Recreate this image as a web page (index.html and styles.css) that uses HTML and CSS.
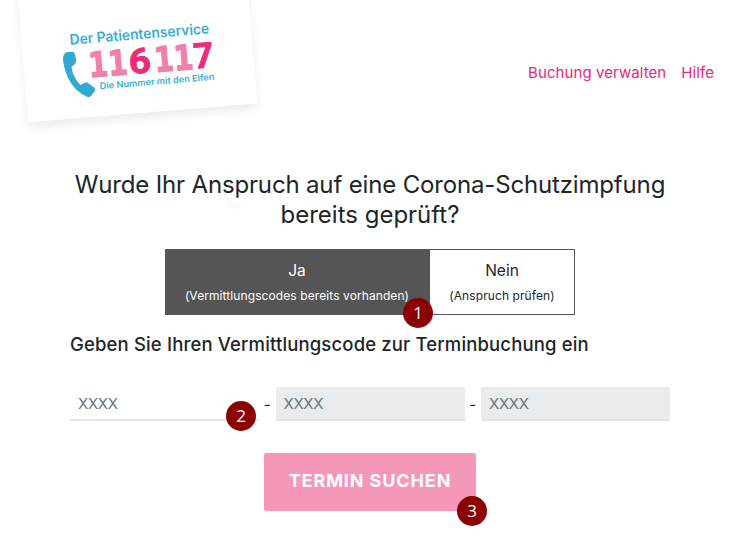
FILE: index.html
```html
<!DOCTYPE html>
<html lang="de">
<head>
<meta charset="utf-8">
<title>116117 Terminservice</title>
<link rel="stylesheet" href="styles.css">
</head>
<body>
<header class="header">
  <a class="logo">
    <span class="logo-card"></span>
    <svg class="logo-art" width="280" height="140" viewBox="0 0 280 140">
      <text class="logo-text" font-size="14.500" textLength="140" lengthAdjust="spacingAndGlyphs" transform="translate(70 44.800) rotate(-4.700)">Der Patientenservice</text>
      <g class="logo-digits">
        <text class="light" font-size="34.500" textLength="39" lengthAdjust="spacingAndGlyphs" transform="translate(89.500 77.300) rotate(-4.700)">11</text>
        <text class="strong" font-size="35" textLength="22" lengthAdjust="spacingAndGlyphs" transform="translate(129.700 74) rotate(-4.700)">6</text>
        <text class="light" font-size="34.500" textLength="39" lengthAdjust="spacingAndGlyphs" transform="translate(155.300 72) rotate(-4.700)">11</text>
        <text class="strong" font-size="35" textLength="20" lengthAdjust="spacingAndGlyphs" transform="translate(194.500 68.500) rotate(-4.700)">7</text>
      </g>
      <text class="logo-text" font-size="9.200" textLength="115" lengthAdjust="spacingAndGlyphs" transform="translate(100 89.300) rotate(-4.700)">Die Nummer mit den Elfen</text>
      <path class="handset" d="M66 52.500Q70 51.200 73.500 52Q75.500 53 76.200 61.500Q76 64 71.500 66.500Q72.500 77 80.500 85Q84 82 87.500 82.500L94 87.500Q96 89 94.500 91.500L91 96Q89.500 97.800 86.500 96.500C73.500 91 65 77 63 60Q62.700 54.500 66 52.500Z"/>
    </svg>
  </a>
  <nav class="nav">
    <a>Buchung verwalten</a>
    <a>Hilfe</a>
  </nav>
</header>
<main class="content">
  <h1 class="title"><span class="line-one">Wurde Ihr Anspruch auf eine Corona-Schutzimpfung</span><br>bereits geprüft?</h1>
  <div class="choices">
    <button class="choice active"><span class="answer">Ja</span><span class="hint">(Vermittlungscodes bereits vorhanden)</span><span class="badge">1</span></button>
    <button class="choice"><span class="answer">Nein</span><span class="hint">(Anspruch prüfen)</span></button>
  </div>
  <h2 class="subtitle">Geben Sie Ihren Vermittlungscode zur Terminbuchung ein</h2>
  <div class="code">
    <div class="field"><span>XXXX</span><b class="badge">2</b></div>
    <span class="dash">-</span>
    <div class="field disabled"><span>XXXX</span></div>
    <span class="dash">-</span>
    <div class="field disabled"><span>XXXX</span></div>
  </div>
  <button class="submit"><span>TERMIN SUCHEN</span><b class="badge">3</b></button>
</main>
</body>
</html>
```
FILE: styles.css
```css
* { box-sizing: border-box; }
body {
  margin: 0;
  height: 540px;
  overflow: hidden;
  background: #fff;
  color: #212529;
  font-family: Inter, "Liberation Sans", sans-serif;
}
button { font: inherit; color: inherit; margin: 0; }
.header {
  height: 140px;
  display: flex;
  justify-content: space-between;
  padding-right: 28px;
}
.logo { position: relative; width: 280px; height: 140px; }
.logo-card {
  position: absolute;
  left: 22px;
  top: -27px;
  width: 230px;
  height: 140px;
  background: #fff;
  transform: rotate(-4.700deg);
  box-shadow: 0 6px 10px rgba(0, 0, 0, .07);
}
.logo-art { position: absolute; left: 0; top: 0; }
.logo-text { font-family: Inter, sans-serif; font-weight: 600; fill: #39afd2; }
.logo-digits { font-weight: 700; }
.light { font-family: "DejaVu Sans", sans-serif; fill: #f17fac; stroke: #f17fac; stroke-width: 1.300px; }
.strong { font-family: Roboto, sans-serif; fill: #e92c7b; stroke: #e92c7b; stroke-width: .900px; }
.handset { fill: #32a9d0; }
.nav {
  display: flex;
  gap: 15px;
  padding-top: 62px;
  font-size: 15px;
  line-height: 21px;
  letter-spacing: .08px;
  color: #e62878;
}
.content {
  width: 600px;
  margin-left: 70px;
  display: flex;
  flex-direction: column;
}
.title {
  margin: 30px 0 0;
  font-size: 24px;
  line-height: 30px;
  font-weight: 400;
  text-align: center;
  white-space: nowrap;
}
.line-one { letter-spacing: -.160px; }
.choices { display: flex; width: 410px; height: 66px; margin: 19px 0 0 95px; }
.choice {
  position: relative;
  width: 145px;
  padding: 10px 0 0;
  border: 1px solid #555;
  border-left: 0;
  background: #fff;
  display: flex;
  flex-direction: column;
  align-items: center;
  white-space: nowrap;
}
.active { z-index: 1; width: 265px; background: #555; color: #fff; }
.answer { font-size: 15.500px; line-height: 22px; }
.hint { font-size: 12px; line-height: 18px; margin-top: 5px; letter-spacing: .09px; }
.badge {
  position: absolute;
  width: 30px;
  height: 30px;
  border-radius: 50%;
  background: #8b0000;
  color: #fff;
  font: 400 17px/30px "Open Sans", sans-serif;
  letter-spacing: 0;
  text-align: center;
}
.choice .badge { right: -4px; bottom: -14px; }
.subtitle {
  margin: 17px 0 0;
  font-size: 18.500px;
  line-height: 24px;
  font-weight: 500;
  letter-spacing: .150px;
  white-space: nowrap;
}
.code { display: flex; margin-top: 31px; }
.field {
  position: relative;
  width: 189px;
  height: 34px;
  padding-left: 8px;
  border-bottom: 2px solid #e5e5e5;
  font-size: 15px;
  line-height: 34px;
  letter-spacing: -.300px;
  color: #6c757d;
}
.disabled { background: #e9ecef; }
.dash { flex: 1; text-align: center; line-height: 35px; font-size: 15px; }
.field .badge { right: 3px; top: 14px; }
.submit {
  position: relative;
  width: 212px;
  height: 58px;
  margin: 32px 0 0 194px;
  margin-top: 32px;
  padding: 0 0 3px;
  border: 0;
  border-radius: 2px;
  background: #f497b9;
  color: #fff;
  font-size: 18px;
  font-weight: 650;
  letter-spacing: .900px;
  white-space: nowrap;
  margin-top: 31px;
}
.submit .badge { right: -11px; bottom: -15px; }
```
